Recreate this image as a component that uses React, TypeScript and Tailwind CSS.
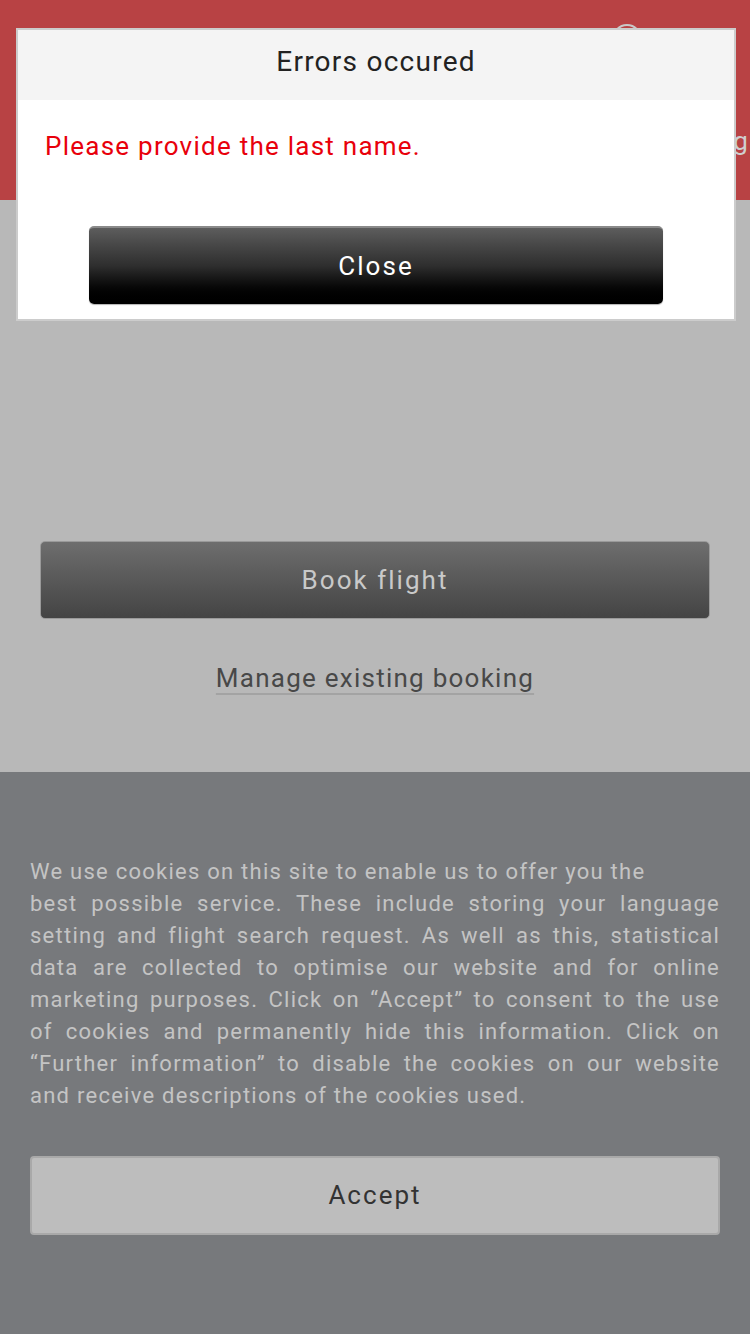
export default function App() {
  const lines = [
    "best possible service. These include storing your language",
    "setting and flight search request. As well as this, statistical",
    "data are collected to optimise our website and for online",
    "marketing purposes. Click on \u201cAccept\u201d to consent to the use",
    "of cookies and permanently hide this information. Click on",
    "\u201cFurther information\u201d to disable the cookies on our website",
  ];

  return (
    <div className="relative w-[750px] h-[1334px] overflow-hidden font-['Roboto',sans-serif] tracking-[0.078em]">
      {/* header */}
      <header className="h-[200px] bg-[#b84244] flex flex-col">
        <div className="pl-[612px] pt-[24px]">
          <div className="w-[30px] h-[30px] rounded-full border-2 border-[#c9c9c9]" />
        </div>
        <div className="flex justify-end mt-[68px] pr-[1px] text-[26px] text-[#cfcfcf] whitespace-nowrap">
          Booking
        </div>
      </header>

      {/* page body */}
      <main className="h-[572px] bg-[#b8b8b8] flex flex-col items-center pt-[341px]">
        <button className="w-[670px] h-[78px] rounded-[5px] border border-[#9a9a9a] bg-gradient-to-b from-[#6e6e6e] to-[#444444] text-[26px] tracking-[0.078em] text-[#c9c9c9]">
          Book flight
        </button>
        <a className="mt-[40px] text-[26px] text-[#484848] underline decoration-[#a3a3a3] decoration-2 underline-offset-[6px]">
          Manage existing booking
        </a>
      </main>

      {/* cookie banner */}
      <section className="h-[562px] bg-[#77797c] px-[30px] flex flex-col">
        <div className="pt-[84px] text-[22px] leading-[32px] text-[#c4c4c4]">
          <p>We use cookies on this site to enable us to offer you the</p>
          {lines.map((l) => (
            <p key={l} className="text-justify [text-align-last:justify]">
              {l}
            </p>
          ))}
          <p>and receive descriptions of the cookies used.</p>
        </div>
        <button className="mt-[44px] h-[79px] w-full rounded-[4px] border-2 border-[#a9a9a9] bg-[#bdbdbd] text-[26px] tracking-[0.078em] text-[#333333]">
          Accept
        </button>
      </section>

      {/* error dialog */}
      <div className="absolute left-[16px] top-[28px] w-[720px] h-[293px] border-2 border-[#cccccc] bg-white flex flex-col">
        <div className="h-[70px] bg-[#f4f4f4] flex items-center justify-center pb-[6px] text-[28px] text-[#222222]">
          Errors occured
        </div>
        <div className="px-[27px] pt-[28px] text-[26px] leading-[36px] text-[#e8000b]">
          Please provide the last name.
        </div>
        <div className="flex justify-center mt-[62px]">
          <button className="w-[574px] h-[78px] rounded-[5px] border-t-2 border-[#8a8a8a] bg-gradient-to-b from-[#5d5d5d] via-[#2e2e2e] to-[#000000] text-[26px] tracking-[0.078em] text-white shadow-[0_1px_1px_rgba(0,0,0,0.3)]">
            Close
          </button>
        </div>
      </div>
    </div>
  );
}
